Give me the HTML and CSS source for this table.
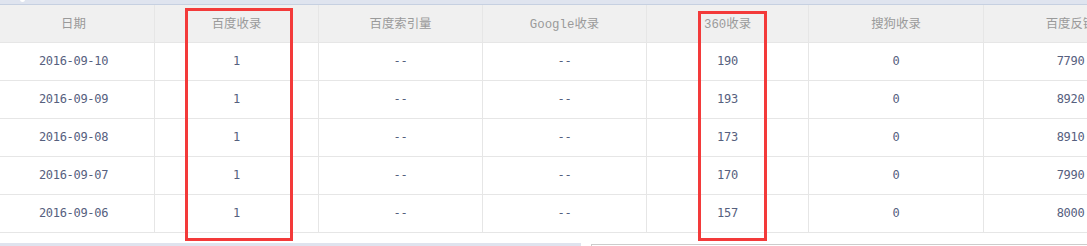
FILE: index.html
```html
<!DOCTYPE html>
<html>
<head>
<meta charset="utf-8">
<link rel="stylesheet" href="styles.css">
</head>
<body>
<div class="page">
  <div class="topbar"><span class="knob"></span></div>
  <div class="grid">
    <div class="cell head">日期</div>
    <div class="cell head">百度收录</div>
    <div class="cell head">百度索引量</div>
    <div class="cell head">Google收录</div>
    <div class="cell head">360收录</div>
    <div class="cell head">搜狗收录</div>
    <div class="cell head">百度反链</div>

    <div class="cell">2016-09-10</div><div class="cell">1</div><div class="cell">--</div><div class="cell">--</div><div class="cell">190</div><div class="cell">0</div><div class="cell">7790</div>
    <div class="cell">2016-09-09</div><div class="cell">1</div><div class="cell">--</div><div class="cell">--</div><div class="cell">193</div><div class="cell">0</div><div class="cell">8920</div>
    <div class="cell">2016-09-08</div><div class="cell">1</div><div class="cell">--</div><div class="cell">--</div><div class="cell">173</div><div class="cell">0</div><div class="cell">8910</div>
    <div class="cell">2016-09-07</div><div class="cell">1</div><div class="cell">--</div><div class="cell">--</div><div class="cell">170</div><div class="cell">0</div><div class="cell">7990</div>
    <div class="cell">2016-09-06</div><div class="cell">1</div><div class="cell">--</div><div class="cell">--</div><div class="cell">157</div><div class="cell">0</div><div class="cell">8000</div>
  </div>
  <div class="bottom">
    <div class="bar"></div>
    <div class="box"></div>
  </div>
  <div class="mark mark-a"></div>
  <div class="mark mark-b"></div>
</div>
</body>
</html>
```
FILE: styles.css
```css
html, body {
  margin: 0;
  padding: 0;
  background: #fff;
  overflow: hidden;
}
.page {
  position: relative;
  width: 1087px;
  height: 246px;
  overflow: hidden;
}
.topbar {
  position: relative;
  height: 4px;
  background: #dfe4ef;
  border-bottom: 1px solid #c6d0e1;
}
.knob {
  position: absolute;
  left: 20px;
  top: -3px;
  width: 5px;
  height: 5px;
  border-radius: 50%;
  background: #fff;
}
.grid {
  display: grid;
  grid-template-columns: 162px 164px 164px 164px 162px 175px 174px;
  grid-auto-rows: 38px;
  margin-left: -7px;
  width: 1165px;
}
.cell {
  box-sizing: border-box;
  border-right: 1px solid #e6e6e6;
  border-bottom: 1px solid #e6e6e6;
  display: flex;
  align-items: center;
  justify-content: center;
  font-family: "DejaVu Sans Mono", "Noto Sans CJK SC", monospace;
  font-size: 12px;
  letter-spacing: -0.3px;
  color: #56607e;
  padding-bottom: 1px;
}
.cell.head {
  height: 38px;
  background: #f0f0f0;
  color: #9a9a9a;
  font-size: 12.4px;
  letter-spacing: 0;
  font-family: "Liberation Mono", "Noto Sans CJK SC", monospace;
}
.bottom {
  display: flex;
  margin-top: 10px;
  height: 10px;
}
.bar {
  width: 581px;
  background: #dfe3ee;
}
.box {
  margin-left: 10px;
  flex: 1;
  border-top: 1px solid #cccccc;
  border-left: 1px solid #cccccc;
  margin-top: 1px;
}
.mark {
  position: absolute;
  border: 3px solid #f33a3a;
  box-sizing: border-box;
}
.mark-a {
  left: 185px;
  top: 8px;
  width: 108px;
  height: 233px;
}
.mark-b {
  left: 698px;
  top: 11px;
  width: 69px;
  height: 230px;
}
```
